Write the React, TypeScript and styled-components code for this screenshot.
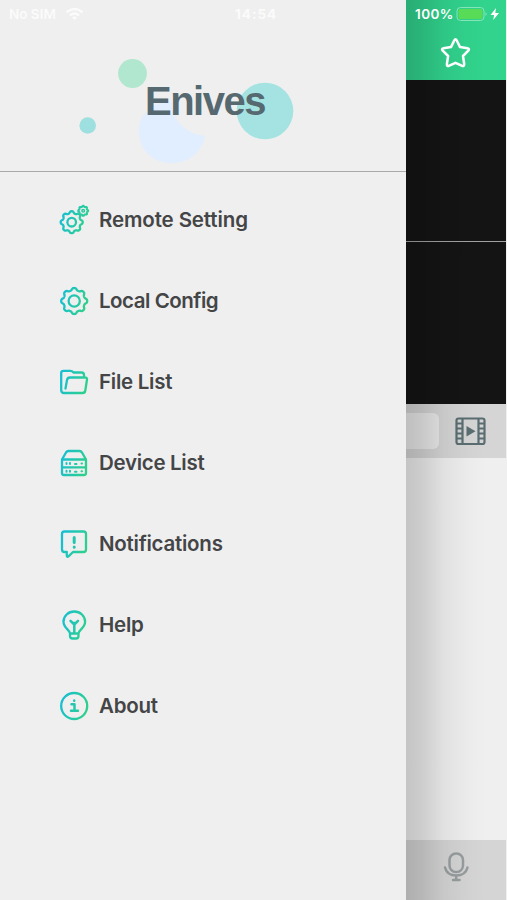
import React from 'react';
import styled, { createGlobalStyle } from 'styled-components';

const Global = createGlobalStyle`
  * { box-sizing: border-box; }
  body { margin: 0; background: #efefef; font-family: Inter, Roboto, "Liberation Sans", sans-serif; }
`;

const Screen = styled.div`
  display: grid;
  grid-template-columns: 406px 100px;
  width: 507px;
  height: 900px;
  overflow: hidden;
  background: #efefef;
`;

const Drawer = styled.aside`
  display: flex;
  flex-direction: column;
  min-width: 0;
`;

const DrawerStatus = styled.div`
  display: grid;
  grid-template-columns: 53px 1fr 171px;
  align-items: center;
  height: 28px;
  padding-left: 9px;
  color: #fbfbfb;
  font-size: 13.5px;
  font-weight: 600;
  line-height: 28px;
  white-space: nowrap;
`;

const Clock = styled.span`
  font-weight: 700;
  letter-spacing: 1px;
`;

const Brand = styled.header`
  position: relative;
  height: 144px;
  border-bottom: 1px solid #a9a9a9;
`;

const Bubbles = styled.svg`
  display: block;
  width: 406px;
  height: 143px;
`;

const BrandName = styled.h1`
  position: absolute;
  left: 145px;
  top: 50px;
  margin: 0;
  color: #566970;
  font: 700 40px/46px "Liberation Sans", Arial, sans-serif;
  letter-spacing: -1.5px;
`;

const Menu = styled.nav`
  display: flex;
  flex-direction: column;
  padding-top: 7px;
`;

const MenuItem = styled.a`
  display: flex;
  align-items: center;
  gap: 9px;
  height: 81px;
  padding-left: 58px;
  color: #444546;
  font-size: 20.5px;
  font-weight: 600;
`;

const MenuIcon = styled.svg`
  flex: none;
  width: 32px;
  height: 32px;
  fill: none;
  stroke: url(#teal);
  stroke-width: 2.3;
  stroke-linecap: round;
  stroke-linejoin: round;
`;

const Label = styled.span<{ $spacing: number }>`
  letter-spacing: ${(p) => p.$spacing}px;
  white-space: nowrap;
`;

const Page = styled.main`
  position: relative;
  display: flex;
  flex-direction: column;
  overflow: hidden;
`;

const PageShade = styled.div`
  position: absolute;
  inset: 0;
  background: linear-gradient(90deg, rgba(0, 0, 0, 0.18), rgba(0, 0, 0, 0.14) 16%, rgba(0, 0, 0, 0.06) 38%, rgba(0, 0, 0, 0.015) 62%, transparent 80%);
  pointer-events: none;
`;

const TopBar = styled.div`
  height: 80px;
  background: #31d38d;
  color: #fff;
`;

const PageStatus = styled.div`
  position: relative;
  z-index: 1;
  display: flex;
  align-items: center;
  height: 28px;
  padding-left: 9px;
  font-size: 13.5px;
  font-weight: 600;
  letter-spacing: 0.45px;
`;

const Drawing = styled.svg`
  display: block;
  flex: none;
  fill: none;
`;

const StarButton = styled.div`
  position: relative;
  z-index: 1;
  padding: 8px 0 0 33px;
`;

const VideoCell = styled.div<{ $line?: boolean }>`
  height: 162px;
  background: #141414;
  border-bottom: ${(p) => (p.$line ? '1px solid #a2a2a2' : '0')};
`;

const Toolbar = styled.div`
  display: flex;
  align-items: center;
  gap: 16px;
  height: 54px;
  background: #d5d5d5;
`;

const Segment = styled.div`
  width: 33px;
  height: 36px;
  background: #e9e9e9;
  border-radius: 0 6px 6px 0;
`;

const Content = styled.div`
  flex: 1;
  background: #efefef;
`;

const BottomBar = styled.div`
  height: 60px;
  padding: 10px 0 0 36px;
  background: #d5d5d5;
`;

/** Builds a closed scalloped outline with the given number of teeth. */
function gear(cx: number, cy: number, r: number, depth: number, teeth = 8): string {
  const steps = teeth * 16;
  const points = Array.from({ length: steps }, (_, i) => {
    const a = (i / steps) * Math.PI * 2;
    const wave = Math.tanh(1.4 * Math.cos(a * teeth)) / Math.tanh(1.4);
    const rad = r - depth / 2 + (wave * depth) / 2;
    return `${(cx + rad * Math.cos(a)).toFixed(2)} ${(cy + rad * Math.sin(a)).toFixed(2)}`;
  });
  return `M${points.join('L')}Z`;
}

const items = [
  {
    label: 'Remote Setting',
    spacing: -0.12,
    icon: (
      <>
        <path d={gear(13.7, 18.2, 11, 2)} />
        <circle cx="13.7" cy="18.2" r="4.300" />
        <path d={gear(25.2, 6.8, 5, 1)} strokeWidth="2" />
        <circle cx="25.2" cy="6.8" r="1.300" strokeWidth="1.500" />
      </>
    ),
  },
  {
    label: 'Local Config',
    spacing: -0.48,
    icon: (
      <>
        <path d={gear(16.2, 16, 13, 2.2)} />
        <circle cx="16.2" cy="16" r="5.6" />
      </>
    ),
  },
  {
    label: 'File List',
    spacing: -0.26,
    icon: (
      <>
        <path d="M26 10.500V9Q26 6.500 23.500 6.500H15.500Q14 4.800 12.500 4.800H5.500Q3.200 4.800 3.200 7V24Q3.200 27 6 27H24.500Q27 27 27.300 24.500L29 13.500Q29.300 11.500 27 11.500H12Q9.500 11.500 9 14L7.500 22.500" />
      </>
    ),
  },
  {
    label: 'Device List',
    spacing: -0.3,
    icon: (
      <>
        <path d="M4 12.500 8 5.500Q9 4 10.500 4H21.500Q23 4 24 5.500L28 12.500V26Q28 28 26 28H6Q4 28 4 26V12.500H28M4 20.300H28" />
        <path d="M8.500 17V16M12 17V16M8.500 24.700V23.700M12 24.700V23.700M17 17H18.500M17 24.700H18.500M23.500 16.500H24M23.500 24.200H24" strokeWidth="2" />
      </>
    ),
  },
  {
    label: 'Notifications',
    spacing: -0.25,
    icon: (
      <>
        <path d="M6.500 3.500H25.500Q28 3.500 28 6V21.500Q28 24 25.500 24H15L10.500 28.300Q8.800 29.500 8.800 27.500V24H6.500Q4 24 4 21.500V6Q4 3.500 6.500 3.500Z" />
        <path d="M16.200 9.500V14.500M16.200 19V19.300" strokeWidth="3" />
      </>
    ),
  },
  {
    label: 'Help',
    spacing: -0.25,
    icon: (
      <>
        <path d="M12 24.500C12 21 5.500 19 5.500 12.700A10.800 10.200 0 0 1 27.100 12.700C27.100 19 20.500 21 20.500 24.500ZM12 24.500V27Q12 29.500 14.500 29.500H18Q20.500 29.500 20.500 27V24.500" />
        <path d="M16.300 23.500V15M16.300 15.500 12.500 11.800M16.300 15.500 20 11.800M14.500 14H18" strokeWidth="2.500" />
      </>
    ),
  },
  {
    label: 'About',
    spacing: -0.25,
    icon: (
      <>
        <circle cx="16.2" cy="16" r="13" />
        <path d="M13.500 14.300H16.500V20.700M13 20.700H20M16.200 10.500V10.700" strokeWidth="2.500" />
      </>
    ),
  },
];

export default function App() {
  return (
    <>
      <Global />
      <Screen>
        <Drawer>
          <DrawerStatus>
            <span>No SIM</span>
            <Drawing width="24" height="14" viewBox="0 0 24 14" stroke="#fbfbfb" strokeWidth="2.400">
              <path d="M4.500 5.200Q12.500-1.200 20.500 5.200M7.800 8.500Q12.500 4.500 17.200 8.500" />
              <path d="M10 10.500Q12.500 8.500 15 10.500L12.500 13Z" fill="#fbfbfb" stroke="none" />
            </Drawing>
            <Clock>14:54</Clock>
          </DrawerStatus>
          <Brand>
            <Bubbles viewBox="0 28 406 143">
              <circle cx="132.500" cy="73.500" r="14.400" fill="#b1e7ce" />
              <circle cx="87.700" cy="125.500" r="8.300" fill="#9ee0df" />
              <path d="M139 131C139 114 151 103 171 101C173 120 183 133 205 136C201 153 189 163 171 163C152 163 139 149 139 131Z" fill="#e0eeff" />
              <circle cx="265" cy="111" r="28.300" fill="#a4e3e2" />
            </Bubbles>
            <BrandName>Enives</BrandName>
          </Brand>
          <Menu>
            {items.map((item) => (
              <MenuItem key={item.label}>
                <MenuIcon viewBox="0 0 32 32">
                  <defs>
                    <linearGradient id="teal" gradientUnits="userSpaceOnUse" x1="3" y1="12" x2="29" y2="20">
                      <stop offset="0" stopColor="#18bfd0" />
                      <stop offset="1" stopColor="#2fd08b" />
                    </linearGradient>
                  </defs>
                  {item.icon}
                </MenuIcon>
                <Label $spacing={item.spacing}>{item.label}</Label>
              </MenuItem>
            ))}
          </Menu>
        </Drawer>
        <Page>
          <PageShade />
          <TopBar>
            <PageStatus>
              100%
              <Drawing width="50" height="18" viewBox="0 0 50 18">
                <rect x="3" y="2.500" width="27" height="13" rx="3.500" stroke="#85e5b8" />
                <rect x="4.500" y="4" width="24" height="10" rx="2" fill="#58dc57" />
                <path d="M31.500 7Q34 9 31.500 11Z" fill="#85e5b8" />
                <path d="M42 3 36.500 10H40L39.300 15 45 8H41.300Z" fill="#fff" />
              </Drawing>
            </PageStatus>
            <StarButton>
              <Drawing width="34" height="34" viewBox="0 0 34 34" stroke="#fff" strokeWidth="2.500" strokeLinejoin="round">
                <path d="M15.200 4.500Q16.500 2 17.800 4.500L21 11.100 28.500 12.200Q31 12.800 29.300 14.600L24 20 25.200 28Q25.300 31 22.700 29.700L16.500 26.800 10.300 29.700Q7.700 31 7.900 28L9.100 20 3.700 14.600Q2 12.800 4.500 12.200L12 11.100Z" />
              </Drawing>
            </StarButton>
          </TopBar>
          <VideoCell $line />
          <VideoCell />
          <Toolbar>
            <Segment />
            <Drawing width="31" height="29" viewBox="0 0 31 29" stroke="#5a6e72" strokeWidth="2.200">
              <rect x="1.500" y="1.500" width="28" height="25.500" rx="2" />
              <path d="M7.500 2V27M23.500 2V27M2 6.500H7M2 11.500H7M2 16.500H7M2 21.500H7M24 6.500H29M24 11.500H29M24 16.500H29M24 21.500H29" />
              <path d="M11.500 9V19.500L20.500 14.200Z" fill="#5a6e72" stroke="none" />
            </Drawing>
          </Toolbar>
          <Content />
          <BottomBar>
            <Drawing width="28" height="32" viewBox="0 0 28 32" stroke="#989e9f" strokeWidth="2.500" strokeLinecap="round">
              <rect x="7.500" y="3.500" width="13.500" height="18.500" rx="6.500" />
              <path d="M3 17.500Q5 25.500 14.200 25.500Q23.500 25.500 25.500 17.500M14.200 26V30M11 30H17.500" />
            </Drawing>
          </BottomBar>
        </Page>
      </Screen>
    </>
  );
}
